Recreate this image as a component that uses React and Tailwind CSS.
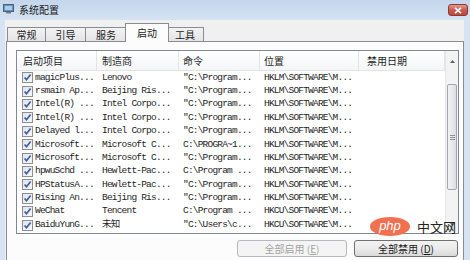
import React from "react";

const rows = [
  ["magicPlus...", "Lenovo", "\"C:\\Program...", "HKLM\\SOFTWARE\\M..."],
  ["rsmain Ap...", "Beijing Ris...", "\"C:\\Program...", "HKLM\\SOFTWARE\\M..."],
  ["Intel(R) ...", "Intel Corpo...", "\"C:\\Program...", "HKLM\\SOFTWARE\\M..."],
  ["Intel(R) ...", "Intel Corpo...", "\"C:\\Program...", "HKLM\\SOFTWARE\\M..."],
  ["Delayed l...", "Intel Corpo...", "\"C:\\Program...", "HKLM\\SOFTWARE\\M..."],
  ["Microsoft...", "Microsoft C...", "C:\\PROGRA~1...", "HKLM\\SOFTWARE\\M..."],
  ["Microsoft...", "Microsoft C...", "\"C:\\Program...", "HKLM\\SOFTWARE\\M..."],
  ["hpwuSchd ...", "Hewlett-Pac...", "C:\\Program ...", "HKLM\\SOFTWARE\\M..."],
  ["HPStatusA...", "Hewlett-Pac...", "\"C:\\Program...", "HKLM\\SOFTWARE\\M..."],
  ["Rising An...", "Beijing Ris...", "\"C:\\Program...", "HKLM\\SOFTWARE\\M..."],
  ["WeChat", "Tencent", "C:\\Program ...", "HKCU\\SOFTWARE\\M..."],
  ["BaiduYunG...", "未知", "\"C:\\Users\\c...", "HKCU\\SOFTWARE\\M..."],
  ["", "", "", ""],
];

function Check() {
  return (
    <svg width="11" height="11" viewBox="0 0 11 11" className="shrink-0">
      <defs>
        <linearGradient id="cb" x1="0" y1="0" x2="1" y2="1">
          <stop offset="0" stopColor="#dfe3ea" />
          <stop offset="1" stopColor="#f7f8fa" />
        </linearGradient>
      </defs>
      <rect x="0.5" y="0.5" width="10" height="10" fill="url(#cb)" stroke="#8e8f93" />
      <path d="M2.6 5.4 L4.5 7.8 L8.6 2.6" fill="none" stroke="#3b5a9c" strokeWidth="1.6" />
    </svg>
  );
}

function Tab({ label, selected, w }) {
  if (selected) {
    return (
      <div
        className={`relative z-10 -mb-px h-[19px] ${w} -mx-[2px] border border-b-0 border-[#898c95] bg-[#fcfcfc] flex items-center justify-center text-[10px] text-[#222] pb-[1px]`}
      >
        {label}
      </div>
    );
  }
  return (
    <div
      className={`h-[14px] ${w} border border-b-0 border-l-0 first:border-l border-[#898c95] bg-gradient-to-b from-[#f3f3f3] to-[#e4e4e4] flex items-center justify-center text-[10px] text-[#222]`}
    >
      {label}
    </div>
  );
}

export default function App() {
  const mono = "font-['Liberation_Mono','Noto_Sans_CJK_SC',monospace] text-[9.5px] tracking-[-0.8px] text-[#1e1e1e]";
  return (
    <div className="relative w-[470px] h-[260px] overflow-hidden bg-[#d6e3f2] font-['Noto_Sans_CJK_SC',sans-serif]">
      {/* Title bar */}
      <div className="h-[20px] flex items-start bg-gradient-to-b from-[#c3d6ec] to-[#d5e3f3]">
        <svg width="11" height="10" viewBox="0 0 11 10" className="ml-[3px] mt-[4px]">
          <rect x="0.5" y="0.5" width="10" height="7" fill="#6c8fc4" stroke="#55606e" />
          <rect x="2" y="2" width="7" height="4" fill="#9fd0f5" />
          <rect x="3" y="8" width="5" height="1.5" fill="#7a7f86" />
        </svg>
        <span className="ml-[5px] mt-[3px] text-[10px] leading-[14px] text-[#1a1a1a]">系统配置</span>
        <div className="ml-auto mr-[2px] mt-[4px] w-[20px] h-[12px] rounded-[3px] border border-[#8b3a33] bg-gradient-to-b from-[#e09a90] via-[#c95a4e] to-[#c0453a] flex items-center justify-center">
          <svg width="8" height="7" viewBox="0 0 8 7">
            <path d="M1 0.8 L7 6.2 M7 0.8 L1 6.2" stroke="#ffffff" strokeWidth="1.6" />
          </svg>
        </div>
      </div>

      {/* Body */}
      <div className="ml-[5px] mr-[6px] h-[240px] bg-[#f0f0f0] pt-[3px] pl-[1px]">
        {/* Tabs */}
        <div className="h-[18px] flex items-end pl-[1px]">
          <Tab label="常规" w="w-[39px]" />
          <Tab label="引导" w="w-[40px]" />
          <Tab label="服务" w="w-[41px]" />
          <Tab label="启动" w="w-[44px]" selected />
          <Tab label="工具" w="w-[37px]" />
        </div>

        {/* Panel */}
        <div className="h-[222px] border border-[#898c95] bg-[#fcfcfc] pt-[8px] pl-[9px] pr-[4px]">
          {/* List view */}
          <div className="w-[443px] h-[184px] border border-[#828790] bg-white flex overflow-hidden">
            <div className="w-[428px] flex flex-col">
              {/* Header */}
              <div className="h-[20px] shrink-0 flex bg-gradient-to-b from-[#ffffff] to-[#f4f6f8] border-b border-[#e2e4e7] text-[10px] text-[#1e1e1e]">
                <div className="w-[80px] pl-[6px] flex items-center border-r border-[#e2e4e7]">启动项目</div>
                <div className="w-[82px] pl-[5px] flex items-center border-r border-[#e2e4e7]">制造商</div>
                <div className="w-[81px] pl-[4px] flex items-center border-r border-[#e2e4e7]">命令</div>
                <div className="w-[99px] pl-[4px] flex items-center border-r border-[#e2e4e7]">位置</div>
                <div className="w-[86px] pl-[8px] flex items-center border-r border-[#e2e4e7]">禁用日期</div>
              </div>
              {/* Rows */}
              {rows.map((r, i) => (
                <div key={i} className={`h-[13.4px] shrink-0 flex items-center whitespace-pre ${mono}`}>
                  <div className="w-[80px] pl-[5px] flex items-center gap-[2px] overflow-hidden">
                    <Check />
                    <span>{r[0]}</span>
                  </div>
                  <div className="w-[82px] pl-[5px] overflow-hidden">{r[1]}</div>
                  <div className="w-[81px] pl-[4px] overflow-hidden">{r[2]}</div>
                  <div className="w-[99px] pl-[4px] overflow-hidden">{r[3]}</div>
                  <div className="w-[86px]" />
                </div>
              ))}
            </div>
            {/* Scrollbar */}
            <div className="w-[13px] shrink-0 flex flex-col bg-[#f3f3f3] border-l border-[#e6e6e6]">
              <div className="h-[20px] shrink-0 flex items-center justify-center">
                <svg width="5" height="3" viewBox="0 0 5 3">
                  <path d="M0 3 L2.5 0 L5 3 Z" fill="#606060" />
                </svg>
              </div>
              <div className="h-[13px] shrink-0" />
              <div className="h-[106px] shrink-0 mx-[1px] rounded-[2px] border border-[#a3a6ab] bg-gradient-to-r from-[#f2f3f4] to-[#dcdee2] flex flex-col items-center justify-center gap-[1px]">
                <div className="w-[5px] h-px bg-[#8d9096]" />
                <div className="w-[5px] h-px bg-[#8d9096]" />
                <div className="w-[5px] h-px bg-[#8d9096]" />
              </div>
              <div className="flex-1" />
              <div className="h-[17px] shrink-0 flex items-center justify-center">
                <svg width="5" height="3" viewBox="0 0 5 3">
                  <path d="M0 0 L2.5 3 L5 0 Z" fill="#606060" />
                </svg>
              </div>
            </div>
          </div>

          {/* Buttons */}
          <div className="mt-[6px] flex justify-end gap-[7px] pr-px">
            <div className="w-[110px] h-[17px] rounded-[3px] border border-[#b6b9bd] bg-[#f4f4f4] flex items-center justify-center text-[10px] text-[#a3a3a3]">
              全部启用 (<span className="underline">E</span>)
            </div>
            <div className="w-[104px] h-[17px] rounded-[3px] border border-[#707070] bg-gradient-to-b from-[#f2f2f2] via-[#ebebeb] to-[#d9d9d9] flex items-center justify-center text-[10px] text-[#1a1a1a]">
              全部禁用 (<span className="underline">D</span>)
            </div>
          </div>
        </div>
      </div>

      {/* Watermark */}
      <div className="absolute left-[370px] top-[217px] flex items-center gap-[7px]">
        <div className="w-[40px] h-[19px] rounded-[50%] bg-[#f0704f] flex items-center justify-center text-white text-[13px] italic leading-none font-['Liberation_Sans',sans-serif] pb-[2px]">
          php
        </div>
        <div className="text-[13px] leading-none text-[#222] font-['Noto_Sans_CJK_SC',sans-serif]">中文网</div>
      </div>
    </div>
  );
}
